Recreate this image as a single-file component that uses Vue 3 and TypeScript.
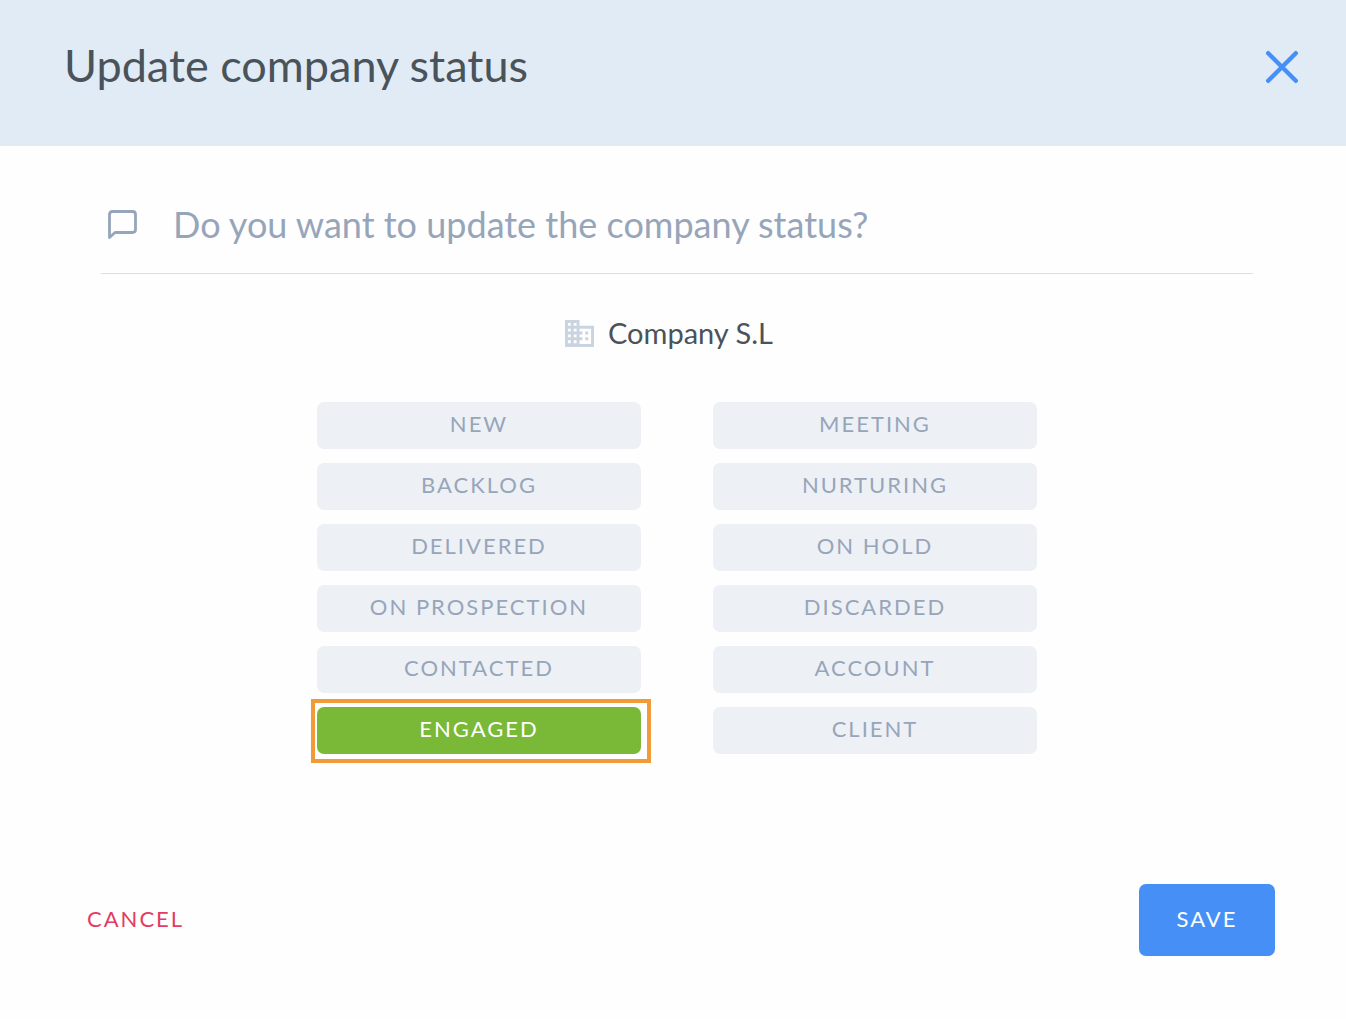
<script setup lang="ts">
import { ref } from 'vue'

const columns: string[][] = [
  ['New', 'Backlog', 'Delivered', 'On prospection', 'Contacted', 'Engaged'],
  ['Meeting', 'Nurturing', 'On hold', 'Discarded', 'Account', 'Client'],
]
const selected = ref('Engaged')
</script>

<template>
  <main class="dialog" role="dialog" aria-labelledby="dialog-title">
    <header class="header">
      <h1 id="dialog-title" class="title">Update company status</h1>
      <button class="close" type="button" aria-label="Close">
        <svg width="36" height="36" viewBox="0 0 36 36" fill="none" stroke="currentColor" stroke-width="4.400" stroke-linecap="round">
          <path d="M4.200 4.200 31.800 31.800M31.800 4.200 4.200 31.800" />
        </svg>
      </button>
    </header>

    <section class="body">
      <div class="question">
        <svg class="bubble" width="29" height="30" viewBox="0 0 29 30" fill="none" stroke="currentColor" stroke-width="2.800" stroke-linejoin="round">
          <path d="M1.500 27.500V4.500Q1.500 1.500 4.500 1.500H24.500Q27.500 1.500 27.500 4.500V19.500Q27.500 22.500 24.500 22.500H7Z" />
        </svg>
        <h2 class="question-text">Do you want to update the company status?</h2>
      </div>

      <p class="company">
        <svg width="29" height="27" viewBox="0 0 30 28" fill="currentColor" fill-rule="evenodd">
          <path d="M0 0H15V6H30V28H0ZM3 3V6H6V3ZM9 3V6H12V3ZM3 9V12H6V9ZM9 9V12H12V9ZM3 15V18H6V15ZM9 15V18H12V15ZM3 21V24H6V21ZM9 21V24H12V21ZM15 9V12H18V15H15V18H18V21H15V25H27V9Z" />
          <path d="M21 12H24V15H21ZM21 18H24V21H21Z" />
        </svg>
        <span>Company S.L</span>
      </p>

      <div class="statuses">
        <div v-for="(column, i) in columns" :key="i" class="column">
          <button
            v-for="status in column"
            :key="status"
            type="button"
            class="status"
            :class="{ active: status === selected }"
            :aria-pressed="status === selected"
            @click="selected = status"
          >
            {{ status }}
          </button>
        </div>
      </div>
    </section>

    <footer class="footer">
      <button class="cancel" type="button">Cancel</button>
      <button class="save" type="button">Save</button>
    </footer>
  </main>
</template>

<style>
body {
  margin: 0;
  background: #fefefe;
}
</style>

<style scoped>
.dialog {
  font-family: Lato, "Open Sans", sans-serif;
  color: #4a525a;
}

button {
  border: 0;
  padding: 0;
  font: inherit;
  cursor: pointer;
}

.header {
  display: flex;
  align-items: flex-start;
  justify-content: space-between;
  box-sizing: border-box;
  min-height: 146px;
  padding: 38px 46px 38px 64px;
  background: #e1ebf5;
}

.title {
  margin: 0;
  font-size: 45px;
  line-height: 54px;
  font-weight: 400;
}

.close {
  display: flex;
  margin-top: 11px;
  background: none;
  color: #458ff7;
}

.body {
  padding: 48px 93px 0 101px;
}

.question {
  display: flex;
  align-items: center;
  gap: 36px;
  padding: 7px 7px 25px;
  border-bottom: 1px solid #d8dfe9;
  color: #97a5ba;
}

.bubble {
  flex: none;
}

.question-text {
  margin: 0;
  font-size: 36px;
  line-height: 47px;
  font-weight: 400;
}

.company {
  display: flex;
  align-items: center;
  justify-content: center;
  gap: 14px;
  margin: 39px 0 49px;
  padding-right: 16px;
  font-size: 29px;
  line-height: 40px;
}

.company svg {
  color: #cad4e0;
}

.statuses {
  display: flex;
  justify-content: center;
  gap: 72px;
}

.column {
  display: flex;
  flex-direction: column;
  flex: 0 1 324px;
  gap: 14px;
}

.status {
  position: relative;
  height: 47px;
  padding-bottom: 3px;
  border-radius: 7px;
  background: #edf1f6;
  color: #97a5ba;
}

.status,
.cancel,
.save {
  font-size: 22px;
  line-height: 28px;
  letter-spacing: 2px;
  text-transform: uppercase;
}

.active {
  background: #7ab937;
  color: #fff;
}

.active::after {
  content: "";
  position: absolute;
  inset: -8px -10px -9px -6px;
  border: 4px solid #f19b38;
}

.footer {
  display: flex;
  align-items: center;
  justify-content: space-between;
  padding: 130px 71px 63px 87px;
}

.cancel {
  padding-bottom: 2px;
  background: none;
  color: #e23c63;
}

.save {
  min-width: 136px;
  padding: 21px 36px 23px;
  border-radius: 7px;
  background: #458ff7;
  color: #fff;
}
</style>
